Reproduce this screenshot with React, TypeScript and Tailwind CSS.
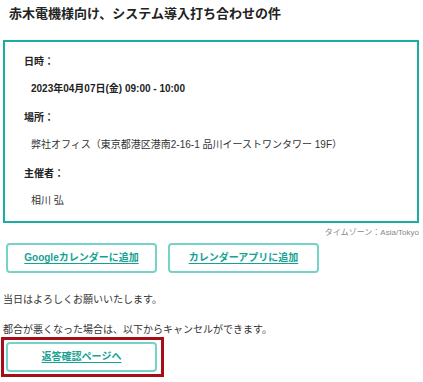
import React from "react";

const font = { fontFamily: '"Liberation Sans", "Noto Sans CJK JP", sans-serif' };

function Colon() {
  return <span className="font-['Noto_Sans_CJK_TC',sans-serif] leading-none">：</span>;
}

function Btn({ children }: { children: React.ReactNode }) {
  return (
    <a
      href="#"
      className="flex h-[30px] w-[151px] items-center justify-center rounded-[4px] border-2 border-[#76d2c7] text-[10px] font-bold leading-[14px] text-[#16a293] underline underline-offset-2"
    >
      {children}
    </a>
  );
}

export default function App() {
  return (
    <div className="h-[382px] w-[423px] bg-white text-[#333]" style={font}>
      <div className="pl-[9px] pt-[6px] text-[13px] font-bold leading-[16px] text-[#222]">
        赤木電機様向け、システム導入打ち合わせの件
      </div>
      <div className="ml-[3px] mt-[18px] w-[416px] border-2 border-[#19ae9f] pb-[13px] pl-[19px] pt-[13px] text-[10px] leading-[14px]">
        <div className="h-[14px] font-bold text-[#222]">日時<Colon /></div>
        <div className="mt-[13px] pl-[7px] font-semibold text-[#222]">2023年04月07日(金) 09:00 - 10:00</div>
        <div className="mt-[15px] h-[14px] font-bold text-[#222]">場所<Colon /></div>
        <div className="mt-[13px] pl-[7px]">弊社オフィス（東京都港区港南2-16-1 品川イーストワンタワー 19F）</div>
        <div className="mt-[15px] h-[14px] font-bold text-[#222]">主催者<Colon /></div>
        <div className="mt-[13px] pl-[7px]">相川 弘</div>
      </div>
      <div className="mt-[5px] h-[10px] w-[419px] text-right text-[8px] leading-[10px] text-[#888]">
        タイムゾーン<Colon />Asia/Tokyo
      </div>
      <div className="mt-[5px] flex gap-[11px] pl-[6px]">
        <Btn>Googleカレンダーに追加</Btn>
        <Btn>カレンダーアプリに追加</Btn>
      </div>
      <div className="mt-[20px] pl-[3px] text-[10px] leading-[14px]">当日はよろしくお願いいたします。</div>
      <div className="mt-[16px] pl-[3px] text-[10px] leading-[14px]">
        都合が悪くなった場合は、以下からキャンセルができます。
      </div>
      <div className="ml-[1px] w-[163px] border-[3px] border-[#a50e17] pb-[2px] pl-[2px] pt-[2px]">
        <Btn>返答確認ページへ</Btn>
      </div>
    </div>
  );
}
